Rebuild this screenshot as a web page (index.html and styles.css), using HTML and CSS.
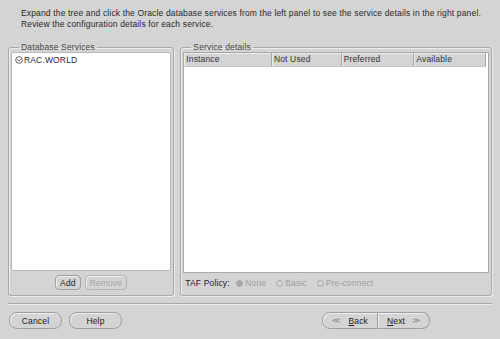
FILE: index.html
```html
<!DOCTYPE html>
<html>
<head>
<meta charset="utf-8">
<link rel="stylesheet" href="styles.css">
</head>
<body>
<div class="page">
  <div class="intro">
    <div>Expand the tree and click the Oracle database services from the left panel to see the service details in the right panel.</div>
    <div>Review the configuration details for each service.</div>
  </div>
  <div class="panels">
    <fieldset class="group left">
      <legend>Database Services</legend>
      <div class="tree">
        <div class="node"><svg width="8" height="8" viewBox="0 0 8 8"><circle cx="4" cy="4" r="3.3" fill="#fff" stroke="#555" stroke-width="0.9"/><path d="M2.2 3.2 L4 5.2 L5.8 3.2" fill="none" stroke="#555" stroke-width="0.9"/></svg><span>RAC.WORLD</span></div>
      </div>
      <div class="btnrow">
        <button class="btn small">Add</button>
        <button class="btn small disabled">Remove</button>
      </div>
    </fieldset>
    <fieldset class="group right">
      <legend>Service details</legend>
      <div class="table">
        <div class="thead">
          <div class="th c1">Instance</div>
          <div class="th c2">Not Used</div>
          <div class="th c3">Preferred</div>
          <div class="th c4">Available</div>
        </div>
        <div class="tbody"></div>
      </div>
      <div class="taf">
        <span class="taflabel">TAF Policy:</span>
        <span class="radio"><i class="dot filled"></i>None</span>
        <span class="radio"><i class="dot"></i>Basic</span>
        <span class="radio"><i class="dot"></i>Pre-connect</span>
      </div>
    </fieldset>
  </div>
  <div class="sep"></div>
  <div class="footer">
    <div class="fl">
      <button class="btn wide">Cancel</button>
      <button class="btn wide">Help</button>
    </div>
    <div class="nav">
      <button class="btn seg back"><span class="arr">&#x226A;</span><span><u>B</u>ack</span></button>
      <button class="btn seg next"><span><u>N</u>ext</span><span class="arr">&#x226B;</span></button>
    </div>
  </div>
</div>
</body>
</html>
```
FILE: styles.css
```css
* { box-sizing: border-box; }
html, body { margin: 0; padding: 0; }
body {
  width: 500px; height: 339px; overflow: hidden;
  background: #d4d4d4;
  font-family: "Liberation Sans", Arial, sans-serif;
  font-size: 8.5px;
  letter-spacing: 0.15px;
  color: #2a2a2a;
}
.page { padding: 0 8px; }
.intro {
  padding: 8px 0 0 13px;
  line-height: 11px;
  height: 43px;
  white-space: nowrap;
}
.panels { display: flex; gap: 6px; height: 253px; }
.group {
  margin: 0; padding: 0 2px 2px;
  border: 1px solid #a9a9a9;
  border-radius: 3px;
  box-shadow: inset 1px 1px 0 #ececec, 1px 1px 0 #ececec;
  display: flex; flex-direction: column;
  min-width: 0;
}
.group legend {
  padding: 0 2px; margin-left: 8px;
  line-height: 9px;
  color: #444;
}
.left { width: 167px; }
.right { width: 313px; }
.tree {
  flex: 1;
  background: #fff;
  border: 1px solid #b8b8b8;
  border-radius: 2px;
  padding: 2px 3px;
}
.node { display: flex; align-items: center; gap: 1px; line-height: 10px; }
.btnrow { display: flex; justify-content: center; gap: 4px; padding: 4px 0 3px; }
.btn {
  font: inherit; letter-spacing: inherit; color: #222;
  background: #d4d4d4;
  border: 1px solid #a0a0a0;
  border-radius: 5px;
  box-shadow: inset 1px 1px 0 #efefef;
  padding: 0;
  height: 16px;
}
.btn.small { padding: 0 4px; height: 15px; border-radius: 4px; }
.btn.disabled { color: #a4a4a4; border-color: #b4b4b4; }
.table {
  flex: 1;
  display: flex; flex-direction: column;
  border: 1px solid #a8a8a8;
  background: #fff;
}
.thead { display: flex; height: 14px; background: #d4d4d4; border-bottom: 1px solid #c8c8c8; margin-right: 2px; }
.th { padding-left: 2px; line-height: 13px; border-right: 1px solid #a8a8a8; box-shadow: inset 1px 1px 0 #ececec; color: #333; }
.c1 { width: 88px; }
.c2 { width: 70px; }
.c3 { width: 73px; }
.c4 { width: 72px; }
.tbody { flex: 1; }
.taf { display: flex; align-items: center; height: 20px; padding-left: 2px; }
.taflabel { width: 51px; color: #222; }
.radio { display: flex; align-items: center; color: #a0a0a0; margin-right: 10px; }
.dot {
  width: 7px; height: 7px; border-radius: 50%;
  border: 1px solid #a8a8a8; margin-right: 2px; display: inline-block;
}
.dot.filled { background: #a8a8a8; }
.sep {
  margin-top: 7px;
  border-top: 1px solid #a8a8a8;
  border-bottom: 1px solid #ececec;
}
.footer { display: flex; justify-content: space-between; padding: 7px 0 0 1px; }
.fl { display: flex; gap: 7px; }
.btn.wide { width: 53px; height: 17px; border-radius: 8px; }
.nav { display: flex; margin-right: 62px; }
.btn.seg { height: 17px; display: flex; align-items: center; justify-content: space-between; padding: 0 9px; }
.back { width: 56px; border-radius: 8px 0 0 8px; }
.next { width: 52px; border-radius: 0 8px 8px 0; border-left: none; }
.arr { color: #888; font-size: 8px; }
u { text-decoration: underline; }
```
